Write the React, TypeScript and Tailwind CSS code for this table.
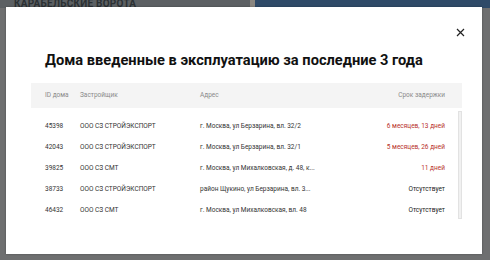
import React from "react";

const rows = [
  { id: "45398", dev: "ООО СЗ СТРОЙЭКСПОРТ", addr: "г. Москва, ул Берзарина, вл. 32/2", delay: "6 месяцев, 13 дней", red: true },
  { id: "42043", dev: "ООО СЗ СТРОЙЭКСПОРТ", addr: "г. Москва, ул Берзарина, вл. 32/1", delay: "5 месяцев, 26 дней", red: true },
  { id: "39825", dev: "ООО СЗ СМТ", addr: "г. Москва, ул Михалковская, д. 48, к...", delay: "11 дней", red: true },
  { id: "38733", dev: "ООО СЗ СТРОЙЭКСПОРТ", addr: "район Щукино, ул Берзарина, вл. 3...", delay: "Отсутствует", red: false },
  { id: "46432", dev: "ООО СЗ СМТ", addr: "г. Москва, ул Михалковская, вл. 48", delay: "Отсутствует", red: false },
];

export default function App() {
  return (
    <div className="relative w-[490px] h-[260px] overflow-hidden bg-[#6e6f70]" style={{ fontFamily: "Roboto, 'Noto Sans', sans-serif" }}>
      <div className="flex h-[8px]">
        <div className="w-[250px] bg-[#5c6063] flex items-end pl-[14px] overflow-hidden">
          <span className="text-[10px] font-bold leading-[8px] text-[#2b3033] tracking-wide">КАРАБЕЛЬСКИЕ ВОРОТА</span>
        </div>
        <div className="w-[5px] bg-[#8a8680]" />
        <div className="flex-1 bg-[#2f4a68]" />
      </div>
      <div className="absolute left-[6px] top-[7px] w-[476px] h-[247px] bg-white shadow-[0_0_2px_rgba(0,0,0,0.3)]">
        <button className="absolute left-[448px] top-[19px] w-[12px] h-[12px] flex items-center justify-center">
          <svg width="9" height="9" viewBox="0 0 9 9"><path d="M1 1L8 8M8 1L1 8" stroke="#222" strokeWidth="1.2" /></svg>
        </button>
        <div className="pt-[43px] pl-[39px]">
          <h2 className="text-[14.65px] font-bold text-[#111] leading-[20px]">Дома введенные в эксплуатацию за последние 3 года</h2>
        </div>
        <div className="ml-[25px] mr-[20px] mt-[13px]">
          <div className="flex items-center h-[25px] bg-[#f4f4f4] text-[6.5px] text-[#8a8a8a]">
            <div className="w-[49px] pl-[14px]">ID дома</div>
            <div className="w-[120px]">Застройщик</div>
            <div className="flex-1">Адрес</div>
            <div className="pr-[17px]">Срок задержки</div>
          </div>
          <div className="relative flex">
            <div className="flex-1 pt-[8px]">
              {rows.map((r) => (
                <div key={r.id} className="flex items-center h-[21px] text-[6.5px] text-[#333]">
                  <div className="w-[49px] pl-[14px]">{r.id}</div>
                  <div className="w-[120px]">{r.dev}</div>
                  <div className="flex-1">{r.addr}</div>
                  <div className={"pr-[13px] " + (r.red ? "text-[#b8322c]" : "text-[#222]")}>{r.delay}</div>
                </div>
              ))}
            </div>
            <div className="w-[4px] mt-[3px] h-[108px] bg-[#f1f1f1] border border-[#e2e2e2]" />
          </div>
        </div>
      </div>
    </div>
  );
}
